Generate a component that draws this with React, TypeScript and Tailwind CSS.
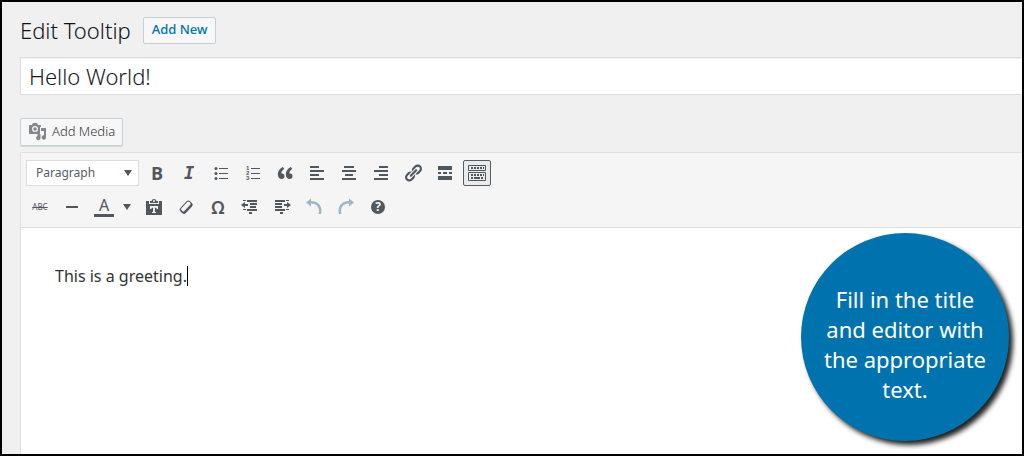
import { ReactNode, useState } from 'react';

const INITIAL_TITLE = 'Hello World!';
const INITIAL_CONTENT = 'This is a greeting.';

type ToolButtonProps = {
  label: string;
  pressed?: boolean;
  children: ReactNode;
};

function ToolButton({ label, pressed, children }: ToolButtonProps) {
  return (
    <button
      type="button"
      aria-label={label}
      aria-pressed={pressed}
      className={
        pressed
          ? 'flex h-[26px] w-7 shrink-0 items-center justify-center rounded-xs border border-[#555d66] bg-[#e9eaeb] text-[#50575f]'
          : 'flex h-[26px] w-7 shrink-0 items-center justify-center rounded-xs text-[#50575f]'
      }
    >
      {children}
    </button>
  );
}

function Icon({ children }: { children: ReactNode }) {
  return (
    <svg className="size-5 shrink-0" viewBox="0 0 20 20" fill="currentColor" aria-hidden="true">
      {children}
    </svg>
  );
}

function Caret() {
  return (
    <svg className="h-[6px] w-2 shrink-0" viewBox="0 0 8 6" fill="currentColor" aria-hidden="true">
      <path d="M0 0h8L4 6z" />
    </svg>
  );
}

function MediaIcon() {
  return (
    <svg className="size-5 shrink-0 text-[#82878c]" viewBox="0 0 20 20" fill="currentColor" aria-hidden="true">
      <path
        fillRule="evenodd"
        d="M2 3h2l1-2h4l1 2h2c.6 0 1 .4 1 1v1h-1v6.5c0 .3-.3.5-.5.5H2c-.6 0-1-.4-1-1V4c0-.6.4-1 1-1zm5 1a3 3 0 1 0 0 6 3 3 0 0 0 0-6zm0 1.2a1.8 1.8 0 1 1 0 3.6 1.8 1.8 0 0 1 0-3.6z"
      />
      <path d="M13 6h5v9.5a2.2 2.2 0 1 1-2-2.2V9h-3z" />
      <path d="M9.5 12h3v4a2.2 2.2 0 1 1-3-2z" />
    </svg>
  );
}

function FormatRow() {
  return (
    <div className="flex items-center gap-1">
      <div className="relative flex h-[26px] w-[113px] items-center">
        <select
          aria-label="Paragraph format"
          className="size-full appearance-none border border-[#dddddd] bg-white pl-[9px] font-['Noto_Sans',sans-serif] text-[12px] text-[#555d66]"
        >
          <option>Paragraph</option>
        </select>
        <span className="pointer-events-none absolute right-[7px] text-[#50575f]">
          <Caret />
        </span>
      </div>
      <ToolButton label="Bold">
        <span className="font-['Open_Sans',sans-serif] text-[18px] leading-5 font-bold">B</span>
      </ToolButton>
      <ToolButton label="Italic">
        <span className="font-['DejaVu_Sans_Mono',monospace] text-[17px] leading-5 font-bold italic">I</span>
      </ToolButton>
      <ToolButton label="Bulleted list">
        <Icon>
          <circle cx="5" cy="5.5" r="1.5" />
          <circle cx="5" cy="10.5" r="1.5" />
          <circle cx="5" cy="15.5" r="1.5" />
          <path d="M8 5h9v1H8zM8 10h9v1H8zM8 15h9v1H8z" />
        </Icon>
      </ToolButton>
      <ToolButton label="Numbered list">
        <Icon>
          <g fontFamily="Liberation Sans, sans-serif" fontSize="6" fontWeight="bold">
            <text x="3" y="7">1</text>
            <text x="3" y="12">2</text>
            <text x="3" y="17">3</text>
          </g>
          <path d="M8 5h9v1H8zM8 10h9v1H8zM8 15h9v1H8z" />
        </Icon>
      </ToolButton>
      <ToolButton label="Blockquote">
        <Icon>
          <path d="M9.5 13.2c0-.7-.2-1.4-.6-1.9-.6-.8-1.8-.9-2.5-.7-.3-1.7 1.1-3.8 2.9-4.7L7.9 4c-2.7 1.3-5.4 4.3-5 8 .3 2.4 1.7 4 3.6 4 .9 0 1.6-.3 2.2-.8.5-.4.8-1.1.8-2zm8 0c0-.7-.2-1.4-.6-1.9-.6-.8-1.8-.9-2.5-.7-.3-1.7 1.1-3.8 2.9-4.7L15.9 4c-2.7 1.3-5.4 4.3-5 8 .3 2.4 1.7 4 3.7 4 .8 0 1.5-.3 2.1-.8.5-.4.8-1.1.8-2z" />
        </Icon>
      </ToolButton>
      <ToolButton label="Align left">
        <Icon>
          <path d="M3 3h9v2H3zM3 7h14v2H3zM3 11h9v2H3zM3 15h14v2H3z" />
        </Icon>
      </ToolButton>
      <ToolButton label="Align center">
        <Icon>
          <path d="M5 3h10v2H5zM3 7h14v2H3zM6 11h8v2H6zM3 15h14v2H3z" />
        </Icon>
      </ToolButton>
      <ToolButton label="Align right">
        <Icon>
          <path d="M8 3h9v2H8zM3 7h14v2H3zM8 11h9v2H8zM3 15h14v2H3z" />
        </Icon>
      </ToolButton>
      <ToolButton label="Insert link">
        <Icon>
          <path d="M17.74 2.76c1.68 1.69 1.68 4.41 0 6.1l-1.53 1.52c-1.12 1.12-2.7 1.47-4.14 1.09l2.62-2.61 1.52-1.53c.84-.84.84-2.2 0-3.04-.84-.85-2.2-.85-3.04 0l-4.15 4.14c-.37-1.44-.02-3.02 1.1-4.14l1.52-1.53c1.69-1.68 4.42-1.68 6.1 0zM8.59 13.43l5.34-5.34c.42-.42.42-1.1 0-1.52-.44-.43-1.13-.39-1.53 0l-5.33 5.34c-.42.42-.42 1.1 0 1.52.44.43 1.13.39 1.52 0zm-.76 2.29l4.14-4.15c.38 1.44.03 3.02-1.09 4.14l-1.52 1.53c-1.69 1.68-4.41 1.68-6.1 0-1.68-1.68-1.68-4.42 0-6.1l1.53-1.52c1.12-1.12 2.7-1.47 4.14-1.1l-4.14 4.15c-.85.84-.85 2.2 0 3.05.84.84 2.2.84 3.04 0z" />
        </Icon>
      </ToolButton>
      <ToolButton label="Insert Read More tag">
        <Icon>
          <path d="M3 3h14v4H3zM3 9h3v2H3zM8 9h4v2H8zM14 9h3v2h-3zM3 13h14v4H3z" />
        </Icon>
      </ToolButton>
      <ToolButton label="Toolbar Toggle" pressed>
        <Icon>
          <g fill="none" stroke="currentColor">
            <path d="M1.5 2.5h17v5h-17zM1.5 9.5h17v8h-17z" />
            <path strokeWidth="2" strokeDasharray="2 1" d="M4 5h13M4 12h13" />
            <path strokeWidth="2" d="M4 15h2M7 15h6M14 15h2" />
          </g>
        </Icon>
      </ToolButton>
    </div>
  );
}

function AdvancedRow() {
  return (
    <div className="flex items-center gap-1">
      <ToolButton label="Strikethrough">
        <span className="font-['Noto_Sans',sans-serif] text-[8px] leading-5 line-through">ABC</span>
      </ToolButton>
      <ToolButton label="Horizontal line">
        <Icon>
          <path d="M4 9h12v2H4z" />
        </Icon>
      </ToolButton>
      <div className="flex">
        <ToolButton label="Text color">
          <span className="flex h-5 w-5 items-start justify-center border-b-3 border-[#50575f] font-['Noto_Sans',sans-serif] text-[16px] leading-4">
            A
          </span>
        </ToolButton>
        <button
          type="button"
          aria-label="Choose text color"
          className="flex h-[26px] w-[18px] items-center justify-center text-[#50575f]"
        >
          <Caret />
        </button>
      </div>
      <ToolButton label="Paste as text">
        <Icon>
          <path d="M6 6V4h1.5a2.6 2.6 0 0 1 5 0H14v2z" />
          <circle cx="10" cy="4" r="1" fill="#f5f5f5" />
          <path fillRule="evenodd" d="M2 4h3v3h10V4h3v14H2zm4 5v3h1.5v-1.3h1.6v4.3H8V16h4v-1h-1.1v-4.3h1.6V12H14V9z" />
        </Icon>
      </ToolButton>
      <ToolButton label="Clear formatting">
        <Icon>
          <g transform="rotate(-47 10 10)">
            <rect x="3" y="6.5" width="14" height="7.5" rx="2.5" />
            <rect x="4.5" y="7.5" width="11.5" height="4" rx="1.5" fill="#f5f5f5" />
          </g>
        </Icon>
      </ToolButton>
      <ToolButton label="Special character">
        <span className="font-['Noto_Sans',sans-serif] text-[18px] leading-5 font-semibold">Ω</span>
      </ToolButton>
      <ToolButton label="Decrease indent">
        <Icon>
          <path d="M3 3h3v1H3zM3 12h3v1H3zM1 8l4-3v2h3v2H5v2zM7 3h10v2H7zM10 6h7v2h-7zM10 9h6v2h-6zM7 12h10v2H7zM9 15h3v2H9z" />
        </Icon>
      </ToolButton>
      <ToolButton label="Increase indent">
        <Icon>
          <path d="M14 3h3v1h-3zM14 12h3v1h-3zM19 8l-4-3v2h-3v2h3v2zM3 3h10v2H3zM3 6h7v2H3zM3 9h7v2H3zM3 12h10v2H3zM8 15h3v2H8z" />
        </Icon>
      </ToolButton>
      <ToolButton label="Undo">
        <span className="text-[#9fb6c8]">
          <Icon>
            <path d="M7 1.5v2.5c6 0 10.5 4 10.5 9.5 0 1.5-.2 2.7-.6 3.5h-2.5c.4-.8.6-1.8.6-3 0-4.5-3-7.5-8-7.5V9.5L2 5.5z" />
          </Icon>
        </span>
      </ToolButton>
      <ToolButton label="Redo">
        <span className="text-[#9fb6c8]">
          <Icon>
            <path d="M13 1.5v2.5c-6 0-10.5 4-10.5 9.5 0 1.5.2 2.7.6 3.5h2.5c-.4-.8-.6-1.8-.6-3 0-4.5 3-7.5 8-7.5V9.5l5-4z" />
          </Icon>
        </span>
      </ToolButton>
      <ToolButton label="Keyboard Shortcuts">
        <Icon>
          <circle cx="10" cy="10" r="7" />
          <text
            x="10"
            y="14"
            fill="#f5f5f5"
            fontFamily="Open Sans, sans-serif"
            fontSize="12"
            fontWeight="bold"
            textAnchor="middle"
          >
            ?
          </text>
        </Icon>
      </ToolButton>
    </div>
  );
}

export default function App() {
  const [title, setTitle] = useState(INITIAL_TITLE);
  const [content, setContent] = useState(INITIAL_CONTENT);

  return (
    <main className="relative flex min-h-screen flex-col border-2 border-black bg-[#f0f0f0] pt-[14px] pl-[18px] font-['Noto_Sans',sans-serif]">
      <header className="flex items-center gap-3">
        <h1 className="text-[22px] leading-7 font-light text-[#0f1317]">Edit Tooltip</h1>
        <a
          href="#new"
          className="flex h-[27px] items-center rounded-xs border border-[#c5d0d6] bg-[#f7f7f7] px-2 text-[13px] font-medium text-[#0073aa]"
        >
          Add New
        </a>
      </header>

      <input
        type="text"
        aria-label="Title"
        value={title}
        onChange={(e) => setTitle(e.target.value)}
        className="mt-[13px] h-[38px] w-full border border-r-0 border-[#dddddd] bg-white px-2 text-[22px] font-light text-[#14181c] inset-shadow-2xs outline-none"
      />

      <button
        type="button"
        className="mt-[23px] flex h-[28px] items-center gap-1 self-start rounded-xs border border-[#c5d3d8] bg-[#f7f7f7] px-[7px] text-[13px] font-light text-[#32373c] shadow-[0_1px_0_#d3dbdf]"
      >
        <MediaIcon />
        Add Media
      </button>

      <section className="mt-[6px] flex grow flex-col border-t border-l border-[#e1e1e1] bg-white">
        <div
          role="toolbar"
          aria-label="Formatting"
          className="flex flex-col gap-2 border-b border-[#dddddd] bg-[#f5f5f5] px-[5px] py-[7px]"
        >
          <FormatRow />
          <AdvancedRow />
        </div>
        <div className="flex items-center pt-9 pl-[34px]">
          <textarea
            aria-label="Content"
            rows={1}
            value={content}
            onChange={(e) => setContent(e.target.value)}
            className="field-sizing-content resize-none text-[16px] leading-6 text-[#333333] outline-none"
          />
          <span className="h-5 w-px bg-black" />
        </div>
      </section>

      <aside className="absolute right-[13px] bottom-[13px] flex size-52 items-center justify-center rounded-full bg-[#0073ae] px-4 pt-[14px] text-center font-['Noto_Sans',sans-serif] text-[22px] leading-[30px] text-white shadow-[4px_4px_5px_#222222]">
        Fill in the title and editor with the appropriate text.
      </aside>
    </main>
  );
}
